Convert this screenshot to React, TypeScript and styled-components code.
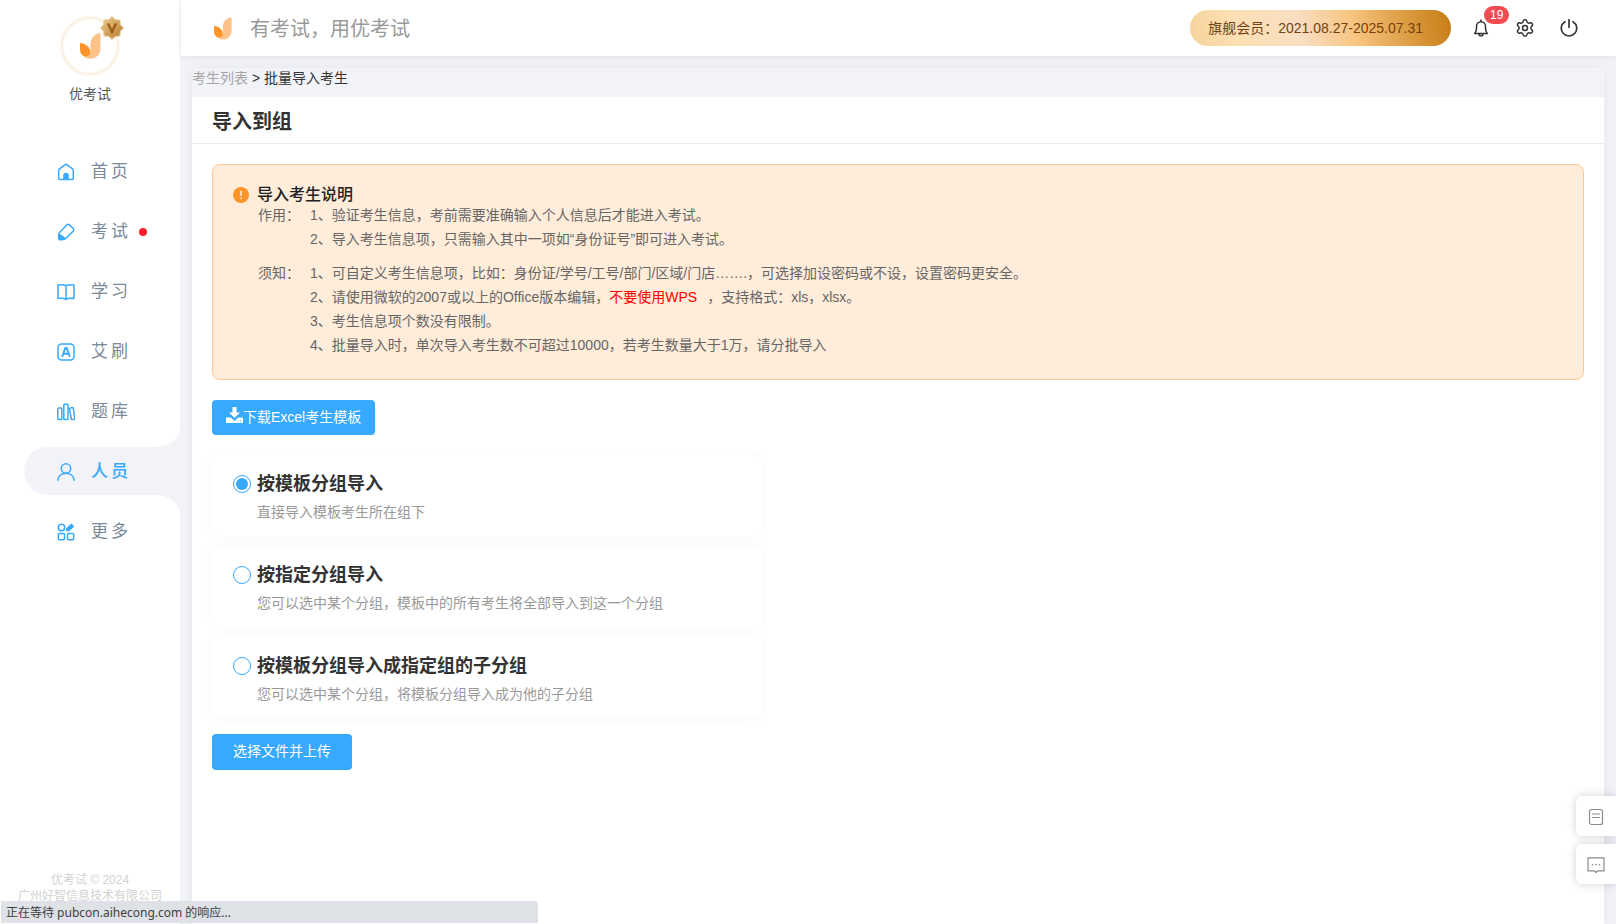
import React from "react";
import styled, { createGlobalStyle, css } from "styled-components";
import { Settings } from "lucide-react";

const BLUE = "#37a9ff";
const PAGE = "#f2f3f8";

const GlobalStyle = createGlobalStyle`
  *, *::before, *::after { box-sizing: border-box; }
  body {
    margin: 0;
    background: ${PAGE};
    color: #333;
    font: 14px/20px "Liberation Sans", "Noto Sans CJK SC", sans-serif;
  }
  h1, h2, p, ol, ul, dl, dd, dt { margin: 0; padding: 0; }
  ol, ul { list-style: none; }
  a { color: inherit; text-decoration: none; }
  button { font: inherit; border: 0; cursor: pointer; }
`;

/* ---------- shell ---------- */

const Shell = styled.div`
  display: grid;
  grid-template-columns: 180px minmax(0, 1fr);
  height: 100vh;
  overflow: hidden;
`;

const Sidebar = styled.aside`
  display: flex;
  flex-direction: column;
  padding: 16px 0 20px;
  background: #fff;
`;

const Content = styled.div`
  display: flex;
  flex-direction: column;
  min-width: 0;
  padding-left: 1px;
`;

/* ---------- sidebar ---------- */

const Profile = styled.div`
  display: flex;
  flex-direction: column;
  align-items: center;
  gap: 8px;
  color: #555;
`;

const Avatar = styled.div`
  position: relative;
  display: grid;
  place-items: center;
  width: 60px;
  height: 60px;
  border: 2px solid #fbf4e8;
  border-radius: 50%;
  box-shadow: inset 0 0 0 1px #f8ead2;
`;

const VipMark = styled.svg`
  position: absolute;
  top: -2px;
  right: -6px;
`;

const NavList = styled.ul`
  display: flex;
  flex-direction: column;
  gap: 12px;
  margin-top: 43px;
  padding-left: 24px;
`;

const activeLink = css`
  background: ${PAGE};
  color: ${BLUE};
  font-weight: 500;

  &::before,
  &::after {
    content: "";
    position: absolute;
    right: 0;
    width: 22px;
    height: 24px;
  }
  &::before {
    bottom: 100%;
    background: radial-gradient(circle at 0 0, transparent 23px, ${PAGE} 24px);
  }
  &::after {
    top: 100%;
    background: radial-gradient(circle at 0 100%, transparent 23px, ${PAGE} 24px);
  }
`;

const NavLink = styled.a<{ $active?: boolean }>`
  position: relative;
  display: flex;
  align-items: center;
  gap: 16px;
  height: 48px;
  padding: 2px 0 0 33px;
  border-radius: 24px 0 0 24px;
  color: #7a8a99;
  font-size: 17px;
  line-height: 24px;
  letter-spacing: 3px;
  ${(p) => p.$active && activeLink}

  svg { color: ${BLUE}; flex: none; }
`;

const Dot = styled.i`
  width: 8px;
  height: 8px;
  margin-left: -8px;
  border-radius: 50%;
  background: #fc1d25;
`;

const Copyright = styled.footer`
  margin-top: auto;
  color: #d2d2d2;
  font-size: 12px;
  line-height: 16px;
  text-align: center;
`;

/* ---------- header ---------- */

const Header = styled.header`
  display: flex;
  align-items: center;
  flex: none;
  height: 56px;
  padding: 0 35px 0 33px;
  background: #fff;
  box-shadow: 0 1px 6px rgba(0, 0, 0, 0.08);
`;

const Slogan = styled.p`
  margin-left: 18px;
  padding-top: 2px;
  color: #999;
  font-size: 20px;
  line-height: 28px;
`;

const Member = styled.div`
  margin-left: auto;
  padding: 8px 28px 8px 18px;
  border-radius: 18px;
  background: linear-gradient(75deg, #f5d29b 0%, #fde0b3 18%, #f9dec3 42%, #f8c581 62%, #dc9c42 82%, #c57c14 100%);
  color: #75400f;
  white-space: nowrap;
`;

const Tools = styled.div`
  display: flex;
  gap: 20px;
  margin-left: 18px;
`;

const ToolButton = styled.button`
  position: relative;
  display: grid;
  place-items: center;
  width: 24px;
  height: 24px;
  padding: 0;
  background: none;
  color: #333;
`;

const Badge = styled.span`
  position: absolute;
  left: 15px;
  top: -10px;
  padding: 0 6px;
  border-radius: 9px;
  background: #f24b52;
  color: #fff;
  font-size: 12px;
  line-height: 18px;
`;

/* ---------- panel ---------- */

const Panel = styled.main`
  flex: 1;
  margin: 12px 12px 0 11px;
  border-radius: 8px 8px 0 0;
  background: #fff;
  box-shadow: 0 0 8px rgba(0, 0, 0, 0.06);
`;

const Breadcrumb = styled.nav`
  height: 29px;
  border-radius: 8px 8px 0 0;
  background: ${PAGE};

  a { color: #a6a6a6; }
`;

const PanelTitle = styled.h1`
  padding: 11px 20px 7px;
  border-bottom: 1px solid #ebebeb;
  font-size: 20px;
  line-height: 28px;
`;

const Body = styled.div`
  display: flex;
  flex-direction: column;
  align-items: flex-start;
  padding: 20px;
`;

const Notice = styled.section`
  align-self: stretch;
  margin-bottom: 20px;
  padding: 22px 20px;
  border: 1px solid #ffc792;
  border-radius: 8px;
  background: #ffecd9;
  color: #666;
`;

const NoticeTitle = styled.h2`
  display: flex;
  align-items: center;
  gap: 8px;
  color: #222;
  font-size: 16px;
  font-weight: 500;
  line-height: 16px;
`;

const NoticeRow = styled.dl`
  display: grid;
  grid-template-columns: 52px 1fr;
  padding-left: 25px;
  line-height: 24px;

  & + & { margin-top: 10px; }
`;

const Warn = styled.span`
  margin-right: 10px;
  color: #f00;
`;

const PrimaryButton = styled.button<{ $compact?: boolean }>`
  display: flex;
  height: ${(p) => (p.$compact ? 35 : 36)}px;
  padding: 7px ${(p) => (p.$compact ? 14 : 21)}px;
  border-radius: 4px;
  background: ${BLUE};
  color: #fff;
`;

const Options = styled.div`
  display: flex;
  flex-direction: column;
  gap: 10px;
  width: 550px;
  max-width: 100%;
  margin: 20px 0 16px;
`;

const OptionCard = styled.label`
  display: grid;
  grid-template-columns: 18px 1fr;
  gap: 6px;
  padding: 17px 21px 14px;
  border-radius: 8px;
  background: #fff;
  box-shadow: 0 0 10px rgba(0, 0, 0, 0.035);
  cursor: pointer;
`;

const Radio = styled.input`
  appearance: none;
  align-self: center;
  width: 18px;
  height: 18px;
  margin: 0;
  padding: 2px;
  border: 1px solid ${BLUE};
  border-radius: 50%;
  background-clip: content-box;

  &:checked { background-color: ${BLUE}; }
`;

const OptionTitle = styled.strong`
  font-size: 18px;
  line-height: 24px;
`;

const OptionText = styled.span`
  grid-column: 2;
  color: #999;
`;

/* ---------- overlays ---------- */

const FloatBar = styled.div`
  position: fixed;
  right: 0;
  bottom: 40px;
  display: flex;
  flex-direction: column;
  gap: 8px;
`;

const FloatButton = styled.button`
  display: grid;
  place-items: center;
  width: 40px;
  height: 40px;
  padding: 2px 0 0;
  border-radius: 6px 0 0 6px;
  background: #fff;
  color: #8c8c8c;
  box-shadow: 0 0 10px rgba(0, 0, 0, 0.18);
`;

const StatusBar = styled.div`
  position: fixed;
  left: 1px;
  bottom: 1px;
  width: 537px;
  padding: 1px 5px 0;
  border-radius: 0 4px 0 0;
  background: #dee1e6;
  color: #3c4043;
  font: 12px/21px "Noto Sans", "Noto Sans CJK SC", sans-serif;
`;

/* ---------- drawings ---------- */

const Logo = ({ width, height }: { width: number; height: number }) => (
  <svg width={width} height={height} viewBox="0 0 21 26" aria-hidden="true">
    <path d="M20.500 0v15.500c0 6-4.500 10.300-10 10.300-3.500 0-6.500-1.500-8-4l8-2V11.500C10.500 5 14 .8 20.500 0z" fill="#ffc38a" />
    <path d="M0 10c6 .5 10.300 4.500 10.300 9 0 2.600-1.700 4.400-4.300 4.400C2.500 23.400 0 20.500 0 16.500z" fill="#ff9429" />
  </svg>
);

const Icon = ({ children, size = 18 }: { children: React.ReactNode; size?: number }) => (
  <svg
    width={size}
    height={size}
    viewBox="0 0 18 18"
    fill="none"
    stroke="currentColor"
    strokeWidth="1.500"
    strokeLinejoin="round"
    strokeLinecap="round"
    aria-hidden="true"
  >
    {children}
  </svg>
);

const HomeIcon = () => (
  <Icon>
    <path d="M1.700 7.500C1.700 6.800 2 6.300 2.500 5.900L7.800 1.800a2 2 0 0 1 2.400 0l5.300 4.100c.5.400.8.900.8 1.600v7.800a1.200 1.200 0 0 1-1.200 1.200H2.900a1.200 1.200 0 0 1-1.200-1.200z" />
    <path d="M6.200 16.500V12.500a2.800 2.800 0 0 1 5.600 0v4z" fill="currentColor" stroke="none" />
  </Icon>
);
const ExamIcon = () => (
  <Icon>
    <path d="M9.800 1.900a1.900 1.900 0 0 1 2.700 0l3.700 3.600a1.900 1.900 0 0 1 0 2.700L9 15.200c-1.200 1.200-2.600 1.600-4.300 1.600H3.500C2.300 16.800 1.700 16.200 1.700 15v-2.700c0-1.300.4-2.400 1.300-3.300z" />
    <path d="M1.700 10.500C3.500 11 8 14 8.700 15.700c-1.200 1-2.500 1.100-4 1.100H3.500C2.300 16.800 1.700 16.200 1.700 15z" fill="currentColor" stroke="none" />
  </Icon>
);
const BookIcon = () => (
  <Icon>
    <path d="M9 2.700C7.500 1.700 4.500 1.400 1 1.900v13.600c3.500-.5 6.500-.2 8 1 1.500-1.200 4.500-1.500 8-1V1.900c-3.500-.5-6.500-.2-8 .8zM9 2.700v13.800" />
  </Icon>
);
const BrushIcon = () => (
  <Icon>
    <rect x="1" y="1" width="16" height="16" rx="3.500" />
    <path d="M5.500 13 8.300 5h1.400l2.800 8M7 10.700h4" strokeWidth="2" />
  </Icon>
);
const BankIcon = () => (
  <Icon>
    <rect x="0.800" y="5" width="4" height="11.500" rx="0.800" />
    <rect x="6.800" y="1.200" width="4.200" height="15.300" rx="0.800" />
    <path d="m12.400 5.400 3-.9a.7.7 0 0 1 .9.500l1.400 10.400a.8.8 0 0 1-.6.900l-1.900.3a.8.8 0 0 1-.9-.6z" />
  </Icon>
);
const PeopleIcon = () => (
  <Icon>
    <circle cx="9" cy="5.500" r="4.700" />
    <path d="M.9 17.200C1.400 12.900 4.700 10.200 9 10.200s7.600 2.700 8.100 7" />
  </Icon>
);
const MoreIcon = () => (
  <Icon>
    <circle cx="4.500" cy="4.500" r="3.200" />
    <rect x="1.300" y="10.500" width="6.200" height="6.200" rx="1" />
    <rect x="10.500" y="10.500" width="6.200" height="6.200" rx="1" />
    <path d="m9.800 5.200 4.700-4.200 2.300 2.500-4.800 4.300h-2.200z" fill="currentColor" strokeWidth="1" />
  </Icon>
);

const BellIcon = () => (
  <Icon>
    <path d="M9 1v1.300M2.700 14.500c1.300-1.500 1.800-3 1.800-5.200V7.500a4.500 4.800 0 0 1 9 0v1.800c0 2.200.5 3.700 1.800 5.200zM7 14.700c0 1.300.8 2.100 2 2.100s2-.8 2-2.100" />
  </Icon>
);
const PowerIcon = () => (
  <Icon>
    <path d="M9 .8v7.400M5 2.700a7.700 7.700 0 1 0 8 0" strokeWidth="1.700" />
  </Icon>
);

const AlertIcon = () => (
  <svg width="16" height="16" viewBox="0 0 16 16" aria-hidden="true">
    <circle cx="8" cy="8" r="8" fill="#ff9429" />
    <path d="M8 4v5M8 10.500v1.600" stroke="#ffecd9" strokeWidth="1.600" />
  </svg>
);

const DownloadIcon = () => (
  <svg width="17" height="16" viewBox="0 0 17 16" fill="currentColor" aria-hidden="true">
    <path d="M6.500 0h4v5.500H14L8.500 11 3 5.500h3.500z" />
    <path d="M0 10.500h4.700L8.500 14l3.800-3.500H17V16H0zM11.500 13.500v1h1v-1zM14 13.500v1h1v-1z" fillRule="evenodd" />
  </svg>
);

const NAV = [
  { label: "首页", icon: <HomeIcon /> },
  { label: "考试", icon: <ExamIcon />, dot: true },
  { label: "学习", icon: <BookIcon /> },
  { label: "艾刷", icon: <BrushIcon /> },
  { label: "题库", icon: <BankIcon /> },
  { label: "人员", icon: <PeopleIcon />, active: true },
  { label: "更多", icon: <MoreIcon /> },
];

const OPTIONS = [
  { title: "按模板分组导入", text: "直接导入模板考生所在组下" },
  { title: "按指定分组导入", text: "您可以选中某个分组，模板中的所有考生将全部导入到这一个分组" },
  { title: "按模板分组导入成指定组的子分组", text: "您可以选中某个分组，将模板分组导入成为他的子分组" },
];

export default function App() {
  return (
    <>
      <GlobalStyle />
      <Shell>
        <Sidebar>
          <Profile>
            <Avatar>
              <Logo width={21} height={26} />
              <VipMark width="24" height="24" viewBox="0 0 24 24" aria-hidden="true">
                <defs>
                  <linearGradient id="vip" x1="0" y1="0" x2="1" y2="1">
                    <stop offset="0" stopColor="#edcf90" />
                    <stop offset="1" stopColor="#b8772a" />
                  </linearGradient>
                </defs>
                <path
                  d="m12 .5 3.200 3.200 4.700.4.400 4.700L23.500 12l-3.200 3.200-.4 4.700-4.700.4L12 23.500l-3.200-3.200-4.700-.4-.4-4.700L.5 12l3.200-3.200.4-4.700 4.700-.4z"
                  fill="url(#vip)"
                  stroke="#e6c88e"
                />
                <path d="m8 7.500 4 8.500 4-8.500" fill="none" stroke="#9a5a12" strokeWidth="2.200" />
              </VipMark>
            </Avatar>
            <span>优考试</span>
          </Profile>
          <nav>
            <NavList>
              {NAV.map((item) => (
                <li key={item.label}>
                  <NavLink href="#" $active={item.active}>
                    {item.icon}
                    <span>{item.label}</span>
                    {item.dot && <Dot />}
                  </NavLink>
                </li>
              ))}
            </NavList>
          </nav>
          <Copyright>
            <p>优考试 © 2024</p>
            <p>广州好智信息技术有限公司</p>
          </Copyright>
        </Sidebar>

        <Content>
          <Header>
            <Logo width={18} height={23} />
            <Slogan>有考试，用优考试</Slogan>
            <Member>旗舰会员：2021.08.27-2025.07.31</Member>
            <Tools>
              <ToolButton aria-label="通知">
                <BellIcon />
                <Badge>19</Badge>
              </ToolButton>
              <ToolButton aria-label="设置">
                <Settings size={20} strokeWidth={1.8} />
              </ToolButton>
              <ToolButton aria-label="退出">
                <PowerIcon />
              </ToolButton>
            </Tools>
          </Header>

          <Panel>
            <Breadcrumb>
              <a href="#">考生列表</a> &gt; 批量导入考生
            </Breadcrumb>
            <PanelTitle>导入到组</PanelTitle>
            <Body>
              <Notice>
                <NoticeTitle>
                  <AlertIcon />
                  导入考生说明
                </NoticeTitle>
                <NoticeRow>
                  <dt>作用：</dt>
                  <dd>
                    <p>1、验证考生信息，考前需要准确输入个人信息后才能进入考试。</p>
                    <p>2、导入考生信息项，只需输入其中一项如“身份证号”即可进入考试。</p>
                  </dd>
                </NoticeRow>
                <NoticeRow>
                  <dt>须知：</dt>
                  <dd>
                    <p>1、可自定义考生信息项，比如：身份证/学号/工号/部门/区域/门店…….，可选择加设密码或不设，设置密码更安全。</p>
                    <p>
                      2、请使用微软的2007或以上的Office版本编辑，<Warn>不要使用WPS</Warn>，支持格式：xls，xlsx。
                    </p>
                    <p>3、考生信息项个数没有限制。</p>
                    <p>4、批量导入时，单次导入考生数不可超过10000，若考生数量大于1万，请分批导入</p>
                  </dd>
                </NoticeRow>
              </Notice>

              <PrimaryButton type="button" $compact>
                <DownloadIcon />
                下载Excel考生模板
              </PrimaryButton>

              <Options role="radiogroup" aria-label="导入方式">
                {OPTIONS.map((option, i) => (
                  <OptionCard key={option.title}>
                    <Radio type="radio" name="mode" defaultChecked={i === 0} />
                    <OptionTitle>{option.title}</OptionTitle>
                    <OptionText>{option.text}</OptionText>
                  </OptionCard>
                ))}
              </Options>

              <PrimaryButton type="button">选择文件并上传</PrimaryButton>
            </Body>
          </Panel>
        </Content>
      </Shell>

      <FloatBar>
        <FloatButton aria-label="文档">
          <Icon>
            <rect x="2.500" y="1.500" width="13" height="15" rx="2" strokeWidth="1.200" />
            <path d="M5.500 6h7M5.500 9.500h7" strokeWidth="1.200" />
          </Icon>
        </FloatButton>
        <FloatButton aria-label="客服">
          <Icon>
            <path d="M1 1.800h16v13h-6.500L9 16.500l-1.500-1.700H1z" strokeWidth="1.200" />
            <path d="M5.500 8.500h.01M9 8.500h.01M12.500 8.500h.01" strokeWidth="1.700" />
          </Icon>
        </FloatButton>
      </FloatBar>
      <StatusBar>正在等待 pubcon.aihecong.com 的响应...</StatusBar>
    </>
  );
}
